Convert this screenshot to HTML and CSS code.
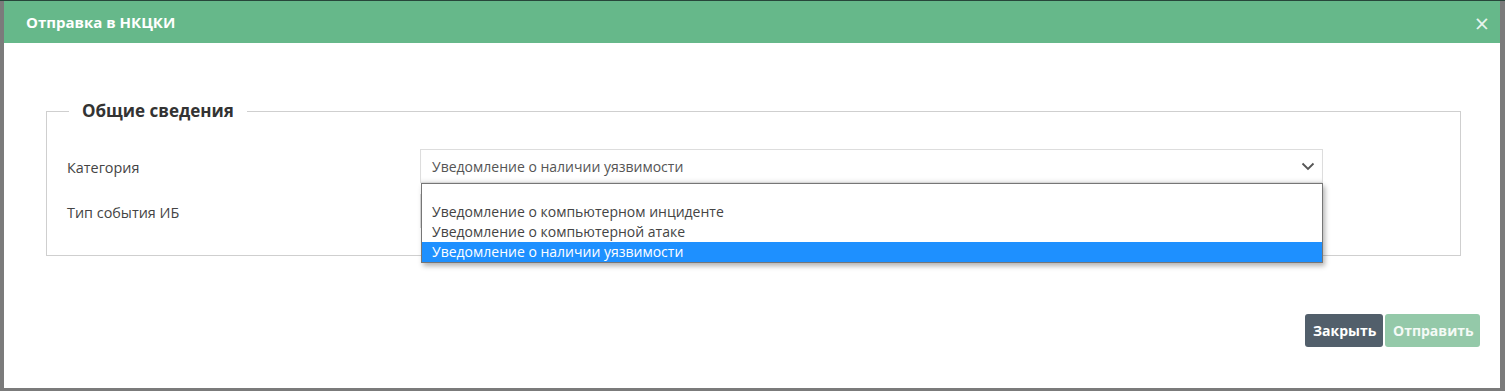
FILE: index.html
```html
<!DOCTYPE html>
<html lang="ru">

<head>
  <meta charset="UTF-8">
  <meta name="viewport" content="width=device-width, initial-scale=1.0">
  <title>Отправка в НКЦКИ</title>
  <link rel="stylesheet" href="styles.css">
</head>

<body>
  <div class="page-edge"></div>

  <!-- Модальное окно -->
  <div class="modal">
    <div class="modal-header">
      <span class="modal-title">Отправка в НКЦКИ</span>
      <span class="modal-close">&times;</span>
    </div>

    <div class="modal-body">
      <fieldset class="group">
        <legend>Общие сведения</legend>

        <div class="form-row">
          <label class="form-label">Категория</label>
          <div class="select-wrap">
            <div class="select">
              <span>Уведомление о наличии уязвимости</span>
              <svg class="chevron" width="14" height="9" viewBox="0 0 14 9">
                <path d="M1.5 1.5 L7 7 L12.5 1.5" fill="none" stroke="#555" stroke-width="1.8" />
              </svg>
            </div>
            <ul class="options">
              <li class="option empty"></li>
              <li class="option">Уведомление о компьютерном инциденте</li>
              <li class="option">Уведомление о компьютерной атаке</li>
              <li class="option selected">Уведомление о наличии уязвимости</li>
            </ul>
          </div>
        </div>

        <div class="form-row">
          <label class="form-label">Тип события ИБ</label>
          <div class="select-wrap">
            <div class="select"></div>
          </div>
        </div>
      </fieldset>
    </div>

    <div class="modal-footer">
      <button class="btn btn-close">Закрыть</button>
      <button class="btn btn-send" disabled>Отправить</button>
    </div>
  </div>
</body>

</html>
```

FILE: styles.css
```css
body {
  margin: 0;
  background-color: #7b7b7b;
  font-family: "Open Sans", "Noto Sans", sans-serif;
  font-size: 14px;
  color: #444;
  height: 391px;
  overflow: hidden;
}

.page-edge {
  height: 1px;
  background-color: #27463a;
}

.modal {
  margin-left: 4px;
  width: 1496px;
  height: 387px;
  background-color: #fff;
  display: flex;
  flex-direction: column;
}

.modal-header {
  height: 42px;
  background-color: #66b88a;
  display: flex;
  align-items: center;
  justify-content: space-between;
  padding: 0 11px 0 22px;
  color: #fff;
}

.modal-title {
  font-weight: 700;
  font-size: 15px;
  margin-top: -1px;
}

.modal-close {
  font-size: 25px;
  line-height: 1;
  opacity: 0.85;
  margin-top: 3px;
}

.modal-body {
  padding: 56px 39px 0 42px;
}

.group {
  margin: 0;
  border: 1px solid #cfcfcf;
  padding: 0 20px 27px 20px;
}

.group legend {
  font-size: 17px;
  font-weight: 700;
  color: #333;
  padding: 0 13px;
  margin-left: 2px;
  line-height: 24px;
}

.form-row {
  display: flex;
  align-items: center;
  height: 34px;
  margin-top: 11px;
}

.form-row:first-of-type {
  margin-top: 26px;
}

.form-label {
  width: 353px;
  flex-shrink: 0;
  margin-top: 3px;
  font-size: 14.4px;
}

.select-wrap {
  position: relative;
  width: 903px;
  height: 34px;
}

.select {
  box-sizing: border-box;
  height: 34px;
  border: 1px solid #ddd;
  box-shadow: inset 0 -4px 4px -3px rgba(0, 0, 0, 0.1);
  display: flex;
  align-items: center;
  justify-content: space-between;
  padding: 0 7px 0 11px;
  color: #555;
}

.chevron {
  margin-top: 1px;
}

.options {
  position: absolute;
  top: 34px;
  left: 1px;
  right: 0;
  margin: 0;
  padding: 0;
  list-style: none;
  background-color: #fff;
  border: 1px solid #767676;
  box-shadow: 2px 3px 5px rgba(0, 0, 0, 0.3);
  z-index: 2;
}

.option {
  height: 20px;
  line-height: 20px;
  padding-left: 10px;
  color: #444;
}

.option.empty {
  height: 18px;
}

.option.selected {
  background-color: #1e90ff;
  color: #fff;
}

.modal-footer {
  margin-top: auto;
  display: flex;
  justify-content: flex-end;
  gap: 2px;
  padding: 0 20px 41px 0;
}

.btn {
  height: 33px;
  border: none;
  border-radius: 3px;
  font-family: "Open Sans", "Noto Sans", sans-serif;
  font-size: 14px;
  font-weight: 700;
  color: #fff;
  padding: 0 8px;
}

.btn-close {
  width: 78px;
  background-color: #525f6b;
}

.btn-send {
  width: 95px;
  background-color: #94c9a9;
  color: #f4faf6;
}
```
